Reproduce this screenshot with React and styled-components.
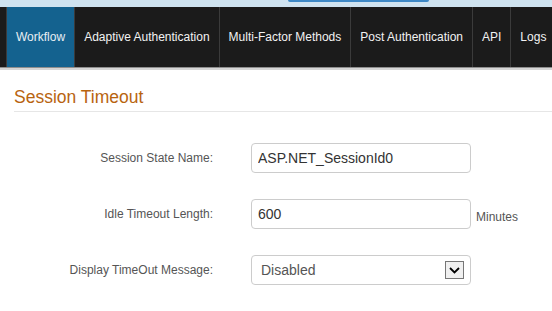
import React from 'react';
import styled, { createGlobalStyle } from 'styled-components';

const GlobalStyle = createGlobalStyle`
  body {
    margin: 0;
    background: #ffffff;
    font-family: "Liberation Sans", Arial, sans-serif;
  }
`;

const TopStrip = styled.div`
  height: 7px;
  background: #cfe3f0;
  overflow: hidden;
`;

const StripButton = styled.div`
  margin-left: 288px;
  width: 141px;
  height: 2px;
  background: #3d88c6;
  border-radius: 0 0 3px 3px;
`;

const Nav = styled.nav`
  display: flex;
  height: 60px;
  overflow: hidden;
  background: #1b1b1b;
  border-bottom: 1px solid #8e8e8e;
  box-shadow: 0 2px 0 #d6d6d6;
`;

const NavEdge = styled.div`
  flex-shrink: 0;
  width: 6px;
  border-right: 1px solid #3b3b3b;
`;

const Tab = styled.div`
  flex-shrink: 0;
  display: flex;
  align-items: center;
  padding: 0 9px;
  border-right: 1px solid #3b3b3b;
  background: ${(p) => (p.active ? '#14628f' : 'transparent')};
  color: ${(p) => (p.active ? '#e8eef3' : '#f2f2f2')};
  font-size: 12px;
  white-space: nowrap;
`;

const Content = styled.main`
  padding: 0 0 0 14px;
`;

const Heading = styled.h2`
  margin: 19px 0 0;
  padding-bottom: 4px;
  border-bottom: 1px solid #e6e6e6;
  color: #b8640f;
  font-size: 17.5px;
  font-weight: normal;
  line-height: 20px;
`;

const Form = styled.div`
  display: grid;
  grid-template-columns: 199px auto;
  column-gap: 38px;
  row-gap: 26px;
  margin-top: 31px;
`;

const Label = styled.label`
  align-self: center;
  text-align: right;
  color: #555555;
  font-size: 12px;
`;

const Field = styled.div`
  display: flex;
  align-items: flex-end;
  gap: 5px;
`;

const Input = styled.input`
  box-sizing: border-box;
  width: 220px;
  height: 30px;
  margin: 0;
  padding: 0 6px;
  border: 1px solid #cccccc;
  border-radius: 4px;
  background: #ffffff;
  color: #333333;
  font-family: "Liberation Sans", Arial, sans-serif;
  font-size: 14px;
  outline: none;
`;

const Unit = styled.span`
  padding-bottom: 5px;
  color: #555555;
  font-size: 12px;
`;

const Select = styled.div`
  box-sizing: border-box;
  display: flex;
  align-items: center;
  justify-content: space-between;
  width: 220px;
  height: 30px;
  padding: 0 6px 0 9px;
  border: 1px solid #cccccc;
  border-radius: 4px;
  color: #555555;
  font-size: 14px;
`;

const ArrowBox = styled.span`
  box-sizing: border-box;
  display: flex;
  align-items: center;
  justify-content: center;
  width: 19px;
  height: 18px;
  border: 1px solid #767676;
  background: #f0f0f0;
`;

const App = () => (
  <>
    <GlobalStyle />
    <TopStrip>
      <StripButton />
    </TopStrip>
    <Nav>
      <NavEdge />
      <Tab active>Workflow</Tab>
      <Tab>Adaptive Authentication</Tab>
      <Tab>Multi-Factor Methods</Tab>
      <Tab>Post Authentication</Tab>
      <Tab>API</Tab>
      <Tab>Logs</Tab>
    </Nav>
    <Content>
      <Heading>Session Timeout</Heading>
      <Form>
        <Label>Session State Name:</Label>
        <Field>
          <Input defaultValue="ASP.NET_SessionId0" />
        </Field>
        <Label>Idle Timeout Length:</Label>
        <Field>
          <Input defaultValue="600" />
          <Unit>Minutes</Unit>
        </Field>
        <Label>Display TimeOut Message:</Label>
        <Field>
          <Select>
            Disabled
            <ArrowBox>
              <svg width="11" height="7" viewBox="0 0 11 7">
                <path d="M1 1 L5.5 5.5 L10 1" fill="none" stroke="#000" strokeWidth="1.8" />
              </svg>
            </ArrowBox>
          </Select>
        </Field>
      </Form>
    </Content>
  </>
);

export default App;
